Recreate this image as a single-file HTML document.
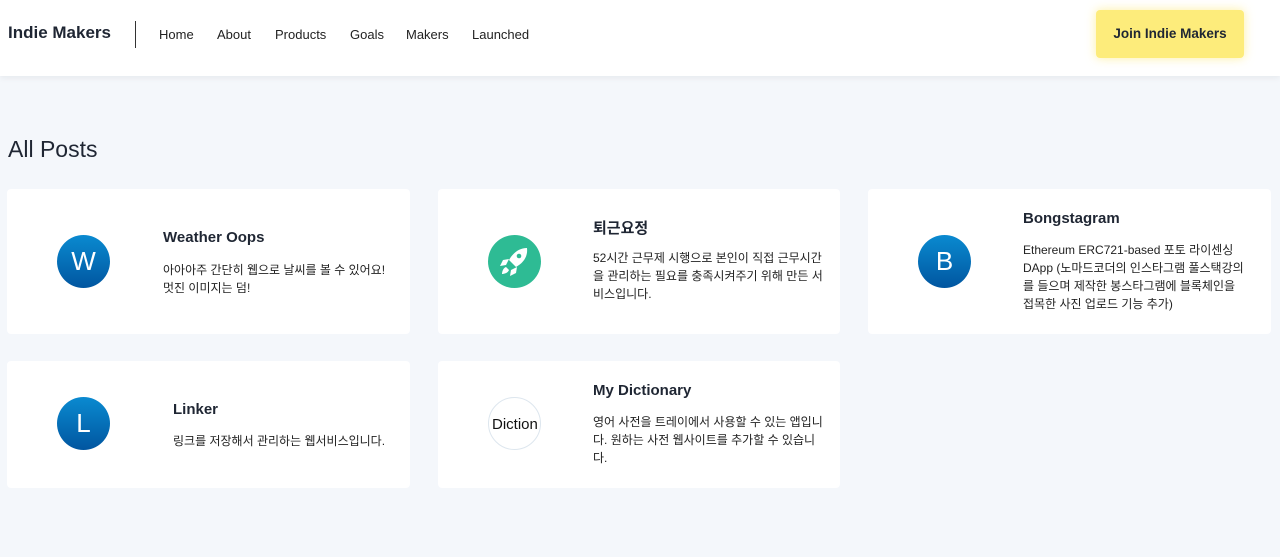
<!DOCTYPE html>
<html><head><meta charset="utf-8"><style>
*{margin:0;padding:0;box-sizing:border-box}
body{width:1280px;height:557px;background:#f4f7fb;font-family:"Liberation Sans","Noto Sans CJK KR",sans-serif;color:#1a2233;position:relative;overflow:hidden}
.nav{position:absolute;left:0;top:0;width:1280px;height:76px;background:#fff;box-shadow:0 2px 6px rgba(0,0,0,.06)}
.logo{position:absolute;left:8px;top:23px;font-size:17px;font-weight:bold;color:#1f2633}
.sep{position:absolute;left:135px;top:21px;width:1px;height:27px;background:#333}
.links a{position:absolute;top:27px;font-size:13px;color:#222;text-decoration:none}
.btn{position:absolute;left:1096px;top:10px;width:148px;height:48px;background:#fdec7b;border-radius:4px;box-shadow:0 0 10px rgba(253,230,100,.6);font-size:13.5px;font-weight:bold;text-align:center;line-height:48px;color:#1f2633}
h1{position:absolute;left:8px;top:136px;font-size:23px;font-weight:normal;color:#1f2633}
.card{position:absolute;background:#fff;border-radius:4px;width:403px}
.av{position:absolute;left:50px;width:53px;height:53px;border-radius:50%;background:linear-gradient(#0a8ad0,#0156a0);color:#fff;font-size:26px;text-align:center;line-height:53px}
.t{position:absolute;font-size:15px;font-weight:bold;color:#1f2633}
.d{position:absolute;font-size:12px;line-height:18px;color:#222;width:235px}
</style></head><body>
<div class="nav">
<div class="logo">Indie Makers</div><div class="sep"></div>
<div class="links"><a style="left:159px">Home</a><a style="left:217px">About</a><a style="left:275px">Products</a><a style="left:350px">Goals</a><a style="left:406px">Makers</a><a style="left:472px">Launched</a></div>
<div class="btn">Join Indie Makers</div>
</div>
<h1>All Posts</h1>
<div class="card" style="left:7px;top:189px;height:145px">
<div class="av" style="top:46px">W</div>
<div class="t" style="left:156px;top:40px">Weather Oops</div>
<div class="d" style="left:156px;top:72px">아아아주 간단히 웹으로 날씨를 볼 수 있어요! 멋진 이미지는 덤!</div>
</div>
<div class="card" style="left:438px;top:189px;height:145px;width:402px">
<div class="av" style="top:46px;background:#2ebb94">
<svg width="53" height="53" viewBox="0 0 53 53"><g fill="#fff"><path d="M39 13c-8 0-14 5-18 12l7 7c7-4 12-10 11-19z"/><path d="M21 24l-6 1-3 6 6-1zM29 32l-1 6-6 3 1-6z"/><path d="M18 32c-3 1-4 5-4 7 2 0 6-1 7-4z"/></g><circle cx="31" cy="21" r="2.3" fill="#2ebb94"/></svg></div>
<div class="t" style="left:155px;top:28px">퇴근요정</div>
<div class="d" style="left:155px;top:60px">52시간 근무제 시행으로 본인이 직접 근무시간을 관리하는 필요를 충족시켜주기 위해 만든 서비스입니다.</div>
</div>
<div class="card" style="left:868px;top:189px;height:145px">
<div class="av" style="top:46px">B</div>
<div class="t" style="left:155px;top:21px">Bongstagram</div>
<div class="d" style="left:155px;top:52px;width:226px">Ethereum ERC721-based 포토 라이센싱 DApp (노마드코더의 인스타그램 풀스택강의를 들으며 제작한 봉스타그램에 블록체인을 접목한 사진 업로드 기능 추가)</div>
</div>
<div class="card" style="left:7px;top:361px;height:127px">
<div class="av" style="top:36px">L</div>
<div class="t" style="left:166px;top:40px">Linker</div>
<div class="d" style="left:166px;top:71px;width:240px">링크를 저장해서 관리하는 웹서비스입니다.</div>
</div>
<div class="card" style="left:438px;top:361px;height:127px;width:402px">
<div class="av" style="top:36px;background:#fff;border:1px solid #dde6ee;color:#111;font-size:15px;overflow:hidden;line-height:53px;text-align:left;padding-left:3px;white-space:nowrap">Diction</div>
<div class="t" style="left:155px;top:21px">My Dictionary</div>
<div class="d" style="left:155px;top:52px">영어 사전을 트레이에서 사용할 수 있는 앱입니다. 원하는 사전 웹사이트를 추가할 수 있습니다.</div>
</div>
</body></html>
